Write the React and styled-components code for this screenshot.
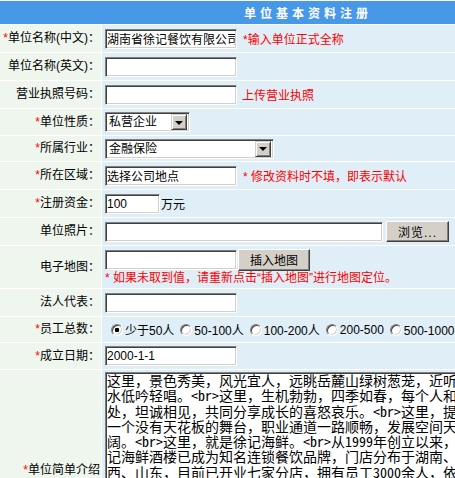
import React from "react";
import styled, { createGlobalStyle } from "styled-components";

const FONT = `"Liberation Sans", "Noto Sans CJK SC", sans-serif`;

const GlobalStyle = createGlobalStyle`
  html, body {
    margin: 0;
    padding: 0;
    overflow: hidden;
    background: #fff;
  }
  body {
    font-family: ${FONT};
    font-size: 12px;
    color: #000;
  }
`;

const Form = styled.form`
  width: 612px;
  display: flex;
  flex-direction: column;
  gap: 1px;
  padding-top: 1px;
  background: #fff;
`;

const Title = styled.div`
  height: 23px;
  background: #4898e8;
  color: #fff;
  font-weight: bold;
  font-size: 12px;
  letter-spacing: 4px;
  display: flex;
  align-items: center;
  justify-content: center;
  padding-left: 4px;
`;

const Row = styled.div`
  display: grid;
  grid-template-columns: 101px 1fr;
  column-gap: 1px;
  height: ${(p) => p.$h}px;
`;

const Label = styled.div`
  background: #eef6ee;
  display: flex;
  align-items: center;
  justify-content: flex-end;
  text-align: right;
  padding-right: 1px;
  white-space: nowrap;
  line-height: 15px;
`;

const Star = styled.span`
  color: #f00;
`;

const Value = styled.div`
  background: #dfeef7;
  display: flex;
  flex-direction: ${(p) => (p.$stack ? "column" : "row")};
  align-items: ${(p) => (p.$stack || p.$top ? "flex-start" : "center")};
  justify-content: ${(p) => (p.$stack ? "center" : "flex-start")};
  padding-left: 3px;
  padding-top: ${(p) => (p.$top ? 2 : 0)}px;
  overflow: hidden;
`;

const inset = `
  box-sizing: border-box;
  border: 1px solid;
  border-color: #808080 #fff #fff #808080;
  box-shadow: inset 1px 1px 0 #404040, inset -1px -1px 0 #d4d0c8;
  background: #fff;
  outline: none;
`;

const TextInput = styled.input`
  ${inset}
  width: ${(p) => p.$w}px;
  height: 20px;
  margin: 0;
  padding: 0 1px;
  font: 12px ${FONT};
  color: #000;
`;

const Hint = styled.span`
  color: #f00;
  margin-left: ${(p) => p.$gap ?? 6}px;
  white-space: nowrap;
`;

const Unit = styled.span`
  margin-left: 1px;
`;

const SelectBox = styled.div`
  ${inset}
  width: ${(p) => p.$w}px;
  height: 20px;
  display: flex;
  align-items: center;
  padding: 2px;
`;

const SelectField = styled.select`
  appearance: none;
  flex: 1;
  min-width: 0;
  height: 100%;
  border: 0;
  margin: 0;
  padding: 0 0 0 1px;
  background: transparent;
  font: 12px ${FONT};
  color: #000;
  outline: none;
`;

const DropButton = styled.span`
  box-sizing: border-box;
  width: 16px;
  height: 16px;
  flex: none;
  background: #d4d0c8;
  border: 1px solid;
  border-color: #d4d0c8 #404040 #404040 #d4d0c8;
  box-shadow: inset 1px 1px 0 #fff, inset -1px -1px 0 #808080;
  display: flex;
  align-items: center;
  justify-content: center;

  &::after {
    content: "";
    border-left: 4px solid transparent;
    border-right: 4px solid transparent;
    border-top: 4px solid #000;
    margin-top: 1px;
  }
`;

const Button = styled.button`
  box-sizing: border-box;
  width: ${(p) => p.$w}px;
  height: ${(p) => p.$h}px;
  margin: 0 0 0 ${(p) => p.$gap}px;
  padding: 0;
  background: #d4d0c8;
  border: 1px solid;
  border-color: #fff #404040 #404040 #fff;
  box-shadow: inset -1px -1px 0 #808080, inset 1px 1px 0 #d4d0c8;
  font: 12px ${FONT};
  color: #000;
  letter-spacing: ${(p) => p.$spacing ?? 0}px;
`;

const Line = styled.div`
  display: flex;
  align-items: center;
`;

const Note = styled.div`
  color: #f00;
  line-height: 15px;
  white-space: nowrap;
`;

const RadioGroup = styled.div`
  display: flex;
  align-items: center;
  gap: 6px;
  padding-left: 6px;
  white-space: nowrap;
`;

const Option = styled.label`
  display: flex;
  align-items: center;
  gap: 2px;
`;

const Radio = styled.input.attrs({ type: "radio" })`
  appearance: none;
  box-sizing: border-box;
  width: 12px;
  height: 12px;
  margin: 0;
  border-radius: 50%;
  border: 1px solid;
  border-color: #808080 #fff #fff #808080;
  box-shadow: inset 1px 1px 0 #404040, inset -1px -1px 0 #d4d0c8;
  background: #fff;

  &:checked {
    background: radial-gradient(circle, #000 0 2px, #fff 2.6px);
  }
`;

const Intro = styled.textarea`
  ${inset}
  width: 480px;
  height: 210px;
  margin: 0;
  padding: 0 1px;
  font: 14px/15.3px "Noto Sans Mono CJK SC", "Noto Sans CJK SC", monospace;
  color: #000;
  white-space: pre;
  overflow: hidden;
  resize: none;
`;

const introText = [
  "这里，景色秀美，风光宜人，远眺岳麓山绿树葱茏，近听湘江流",
  "水低吟轻唱。<br>这里，生机勃勃，四季如春，每个人和睦相",
  "处，坦诚相见，共同分享成长的喜怒哀乐。<br>这里，提供",
  "一个没有天花板的舞台，职业通道一路顺畅，发展空间天高地",
  "阔。<br>这里，就是徐记海鲜。<br>从1999年创立以来，徐",
  "记海鲜酒楼已成为知名连锁餐饮品牌，门店分布于湖南、江",
  "西、山东，目前已开业七家分店，拥有员工3000余人，依",
  "托优质的产品和服务，赢得了广大顾客的认可。",
].join("\n");

const staffOptions = ["少于50人", "50-100人", "100-200人", "200-500", "500-1000人"];

const Field = ({ label, required, h = 27, children, ...rest }) => (
  <Row $h={h}>
    <Label>
      {required && <Star>*</Star>}
      {label}
    </Label>
    <Value {...rest}>{children}</Value>
  </Row>
);

export default function App() {
  return (
    <>
      <GlobalStyle />
      <Form onSubmit={(e) => e.preventDefault()}>
        <Title>单位基本资料注册</Title>

        <Field label="单位名称(中文)：" required>
          <TextInput $w={132} defaultValue="湖南省徐记餐饮有限公司" />
          <Hint>*输入单位正式全称</Hint>
        </Field>

        <Field label="单位名称(英文)：">
          <TextInput $w={132} />
        </Field>

        <Field label="营业执照号码：">
          <TextInput $w={132} />
          <Hint $gap={5}>上传营业执照</Hint>
        </Field>

        <Field label="单位性质：" required h={26}>
          <SelectBox $w={85}>
            <SelectField defaultValue="私营企业">
              <option>私营企业</option>
              <option>国有企业</option>
              <option>外资企业</option>
            </SelectField>
            <DropButton />
          </SelectBox>
        </Field>

        <Field label="所属行业：" required h={25}>
          <SelectBox $w={169}>
            <SelectField defaultValue="金融保险">
              <option>金融保险</option>
              <option>餐饮服务</option>
            </SelectField>
            <DropButton />
          </SelectBox>
        </Field>

        <Field label="所在区域：" required>
          <TextInput $w={132} defaultValue="选择公司地点" />
          <Hint>* 修改资料时不填，即表示默认</Hint>
        </Field>

        <Field label="注册资金：" required>
          <TextInput $w={55} defaultValue="100" />
          <Unit>万元</Unit>
        </Field>

        <Field label="单位照片：">
          <TextInput $w={278} />
          <Button $w={63} $h={21} $gap={3} $spacing={1}>
            浏览...
          </Button>
        </Field>

        <Field label="电子地图：" h={42} $stack>
          <Line>
            <TextInput $w={132} />
            <Button $w={72} $h={22} $gap={1}>
              插入地图
            </Button>
          </Line>
          <Note>* 如果未取到值，请重新点击“插入地图”进行地图定位。</Note>
        </Field>

        <Field label="法人代表：">
          <TextInput $w={132} />
        </Field>

        <Field label="员工总数：" required h={25}>
          <RadioGroup>
            {staffOptions.map((o, i) => (
              <Option key={o}>
                <Radio name="staff" defaultChecked={i === 0} />
                {o}
              </Option>
            ))}
          </RadioGroup>
        </Field>

        <Field label="成立日期：" required h={26}>
          <TextInput $w={132} defaultValue="2000-1-1" />
        </Field>

        <Row $h={216}>
          <Label>
            <span>
              <Star>*</Star>单位简单介绍
              <br />：
            </span>
          </Label>
          <Value $top>
            <Intro defaultValue={introText} />
          </Value>
        </Row>
      </Form>
    </>
  );
}
